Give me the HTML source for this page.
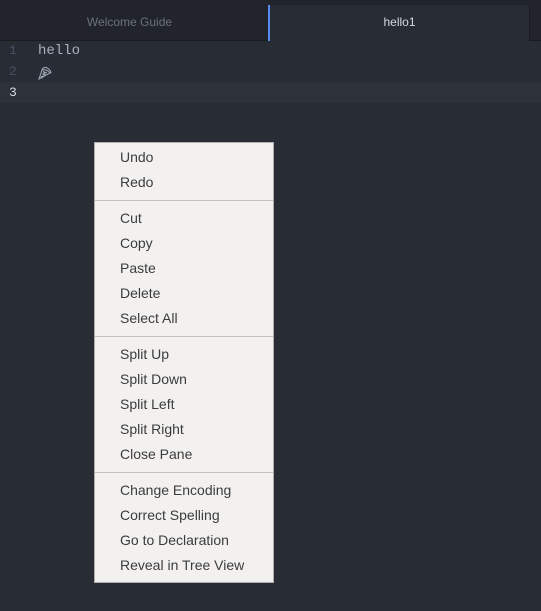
<!DOCTYPE html><html><head><style>
body{margin:0;width:541px;height:611px;background:#282c34;position:relative;overflow:hidden;font-family:"Liberation Sans",sans-serif}
.tabs{position:absolute;left:0;top:0;width:541px;height:40px;background:#21252b;border-bottom:1px solid #181a1f}
.tab{position:absolute;top:0;height:40px;line-height:44px;text-align:center;font-size:12px}
.t1{left:0;width:259px;color:#6b717d}
.t2{left:268px;width:259px;top:5px;height:36px;line-height:34px;background:#282c34;color:#d7dae0;border-left:2px solid #568af2;border-right:1px solid #181a1f}
.ln{position:absolute;left:0;width:24px;text-align:left;padding-left:9px;font-family:"Liberation Mono",monospace;font-size:13px;color:#495162}
.code{position:absolute;left:38px;font-family:"Liberation Mono",monospace;font-size:14px;color:#abb2bf}
.hl{position:absolute;left:0;top:82px;width:541px;height:21px;background:#2c313a}
.menu{position:absolute;left:94px;top:142px;width:178px;height:437px;background:#f2f1f0;border:1px solid #b0aeaa;padding-top:2px}
.i{height:25px;line-height:25px;padding-left:25px;font-size:14px;color:#3c3c3c}
.s{height:1px;background:#c4c2bf;margin:5px 0}
</style></head><body>
<div class="tabs"><div class="tab t1">Welcome Guide</div><div class="tab t2">hello1</div></div>
<div class="hl"></div>
<div class="ln" style="top:43px">1</div><div class="ln" style="top:64px">2</div><div class="ln" style="top:85px;color:#d7dae0">3</div>
<div class="code" style="top:43px">hello</div>
<svg style="position:absolute;left:38px;top:66px" width="14" height="14" viewBox="0 0 14 14" fill="none" stroke="#9da5b4" stroke-width="1.1"><path d="M1 13 L4 4 Q9 3 12 7 Z"/><path d="M4 4 Q5 1 8 1.5 Q12 3 13 6.5 L12 7"/><circle cx="6" cy="8" r="1"/><circle cx="4" cy="11" r=".7"/><path d="M5 5.5 L9 7"/></svg>
<div class="menu">
<div class="i">Undo</div><div class="i">Redo</div><div class="s"></div>
<div class="i">Cut</div><div class="i">Copy</div><div class="i">Paste</div><div class="i">Delete</div><div class="i">Select All</div><div class="s"></div>
<div class="i">Split Up</div><div class="i">Split Down</div><div class="i">Split Left</div><div class="i">Split Right</div><div class="i">Close Pane</div><div class="s"></div>
<div class="i">Change Encoding</div><div class="i">Correct Spelling</div><div class="i">Go to Declaration</div><div class="i">Reveal in Tree View</div>
</div>
</body></html>
